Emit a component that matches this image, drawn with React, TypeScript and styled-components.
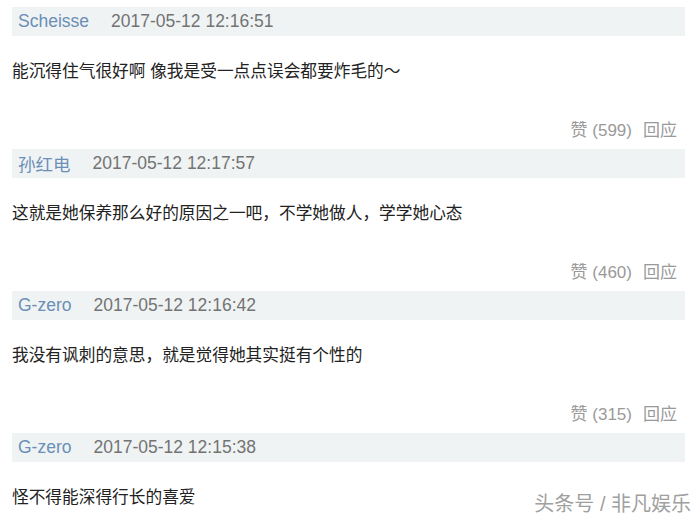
import React from 'react'
import { styled, createGlobalStyle } from 'styled-components'

const GlobalStyle = createGlobalStyle`
  html, body {
    margin: 0;
    padding: 0;
    background: #fff;
  }
  body {
    font-family: "Liberation Sans", "Noto Sans CJK SC", sans-serif;
  }
`

const Page = styled.div`
  position: relative;
  width: 700px;
  height: 523px;
  overflow: hidden;
  padding: 7px 15px 0 12px;
  box-sizing: border-box;
`

const List = styled.div`
  display: flex;
  flex-direction: column;
`

const Comment = styled.div`
  display: flex;
  flex-direction: column;
  padding-bottom: 9px;
`

const Header = styled.div`
  height: 29px;
  background-color: #eff3f3;
  display: flex;
  align-items: center;
  padding-left: 6px;
  gap: 22px;
  font-size: 17.5px;
`

const Name = styled.span`
  color: #6b8fb6;
`

const Time = styled.span`
  color: #737373;
`

const Body = styled.div`
  margin-top: 24px;
  line-height: 24px;
  font-size: 16.7px;
  color: #222;
`

const Actions = styled.div`
  margin-top: 32px;
  height: 24px;
  display: flex;
  justify-content: flex-end;
  align-items: center;
  gap: 11px;
  padding-right: 8px;
  font-size: 17px;
  color: #9a9a9a;
`

const Watermark = styled.div`
  position: absolute;
  right: 9px;
  bottom: 6px;
  font-size: 20px;
  color: #a0a0a0;
  text-shadow: 1px 1px 0 #fff, -1px -1px 0 #fff, 1px -1px 0 #fff, -1px 1px 0 #fff;
`

interface Item {
  name: string
  time: string
  text: string
  likes?: number
}

const items: Item[] = [
  { name: 'Scheisse', time: '2017-05-12 12:16:51', text: '能沉得住气很好啊 像我是受一点点误会都要炸毛的～', likes: 599 },
  { name: '孙红电', time: '2017-05-12 12:17:57', text: '这就是她保养那么好的原因之一吧，不学她做人，学学她心态', likes: 460 },
  { name: 'G-zero', time: '2017-05-12 12:16:42', text: '我没有讽刺的意思，就是觉得她其实挺有个性的', likes: 315 },
  { name: 'G-zero', time: '2017-05-12 12:15:38', text: '怪不得能深得行长的喜爱' },
]

const App = () => {
  return (
    <Page>
      <GlobalStyle />
      <List>
        {items.map((item, i) => (
          <Comment key={i}>
            <Header>
              <Name>{item.name}</Name>
              <Time>{item.time}</Time>
            </Header>
            <Body>{item.text}</Body>
            {item.likes !== undefined && (
              <Actions>
                <span>赞 ({item.likes})</span>
                <span>回应</span>
              </Actions>
            )}
          </Comment>
        ))}
      </List>
      <Watermark>头条号 / 非凡娱乐</Watermark>
    </Page>
  )
}

export default App
